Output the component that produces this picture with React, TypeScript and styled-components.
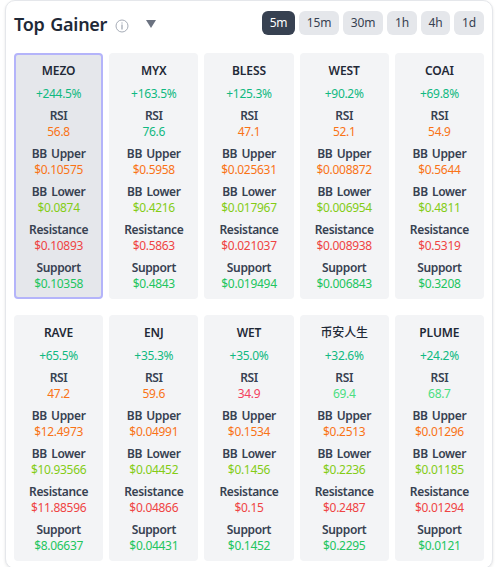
import React from "react";
import styled, { createGlobalStyle } from "styled-components";

const GlobalStyle = createGlobalStyle`
  * { box-sizing: border-box; }
  body {
    margin: 0;
    background: #fff;
    overflow: hidden;
    font-family: "Noto Sans", "Noto Sans CJK SC", sans-serif;
    color: #1f2937;
  }
`;

const Panel = styled.section`
  width: 488px;
  height: 569px;
  margin-left: 5px;
  padding: 10px 8px 8px;
  border: 1px solid #e5e7eb;
  border-radius: 10px;
  background: #fff;
  box-shadow: 0 1px 3px rgba(0, 0, 0, 0.1);
`;

const Header = styled.header`
  display: flex;
  align-items: center;
  height: 24px;
  margin-bottom: 18px;
`;

const Heading = styled.h2`
  margin: 0;
  width: 101px;
  font-size: 18px;
  line-height: 24px;
  font-weight: 600;
  letter-spacing: -0.3px;
  word-spacing: 1.5px;
  white-space: nowrap;
  padding-top: 2px;
`;

const InfoIcon = styled.svg`
  width: 14px;
  height: 14px;
  margin-top: 5px;
  flex: none;
`;

const Caret = styled.svg`
  width: 10px;
  height: 8px;
  margin: 1px 0 0 17px;
  flex: none;
`;

const Periods = styled.div`
  display: flex;
  gap: 4px;
  margin-left: auto;
`;

const PeriodButton = styled.button<{ $active?: boolean; $width: number }>`
  width: ${(p) => p.$width}px;
  height: 24px;
  padding: 0;
  border: 0;
  border-radius: 6px;
  font: 400 12px/24px "Noto Sans", sans-serif;
  letter-spacing: -0.2px;
  color: ${(p) => (p.$active ? "#fff" : "#374151")};
  background: ${(p) => (p.$active ? "#374151" : "#e5e7eb")};
`;

const Grid = styled.div`
  display: grid;
  grid-template-columns: repeat(5, 1fr);
  gap: 16px 6px;
`;

const Card = styled.article<{ $selected?: boolean }>`
  display: flex;
  flex-direction: column;
  gap: 6px;
  height: 246px;
  padding: 8px 0 0;
  border: 2px solid ${(p) => (p.$selected ? "#b4b4fa" : "transparent")};
  border-radius: 4px;
  background: ${(p) => (p.$selected ? "#e5e7eb" : "#f3f4f6")};
  text-align: center;
  font-size: 12px;
  line-height: 16px;
  white-space: nowrap;
`;

const Symbol = styled.div`
  height: 17px;
  font-family: "Noto Sans", "Noto Sans CJK JP", sans-serif;
  font-weight: 600;
  letter-spacing: -0.1px;

  &:lang(zh) {
    font-weight: 500;
  }
`;

const Label = styled.div`
  font-weight: 600;
  color: #374151;
  letter-spacing: -0.35px;
  word-spacing: 1.5px;
`;

const Value = styled.div<{ $color: string }>`
  color: ${(p) => p.$color};
  letter-spacing: -0.3px;
`;

const GREEN = "#10b981";
const LIGHT_GREEN = "#4ade80";
const ORANGE = "#f97316";
const ROSE = "#f43f5e";

const rsiColor = (rsi: number) =>
  rsi >= 70 ? GREEN : rsi >= 60 ? LIGHT_GREEN : rsi >= 40 ? ORANGE : ROSE;

const coins: [string, string, number, string, string, string, string][] = [
  ["MEZO", "244.5", 56.8, "0.10575", "0.0874", "0.10893", "0.10358"],
  ["MYX", "163.5", 76.6, "0.5958", "0.4216", "0.5863", "0.4843"],
  ["BLESS", "125.3", 47.1, "0.025631", "0.017967", "0.021037", "0.019494"],
  ["WEST", "90.2", 52.1, "0.008872", "0.006954", "0.008938", "0.006843"],
  ["COAI", "69.8", 54.9, "0.5644", "0.4811", "0.5319", "0.3208"],
  ["RAVE", "65.5", 47.2, "12.4973", "10.93566", "11.88596", "8.06637"],
  ["ENJ", "35.3", 59.6, "0.04991", "0.04452", "0.04866", "0.04431"],
  ["WET", "35.0", 34.9, "0.1534", "0.1456", "0.15", "0.1452"],
  ["币安人生", "32.6", 69.4, "0.2513", "0.2236", "0.2487", "0.2295"],
  ["PLUME", "24.2", 68.7, "0.01296", "0.01185", "0.01294", "0.0121"],
];

const periods: [string, number][] = [
  ["5m", 33],
  ["15m", 40],
  ["30m", 40],
  ["1h", 30],
  ["4h", 29],
  ["1d", 30],
];

const isLatin = (text: string) => /^[A-Z]+$/.test(text);

export default function App() {
  return (
    <>
      <GlobalStyle />
      <Panel>
        <Header>
          <Heading>Top Gainer</Heading>
          <InfoIcon viewBox="0 0 14 14" fill="none" stroke="#9ca3af">
            <circle cx="7" cy="7" r="6" strokeWidth="0.9" />
            <path d="M7 3.4v1.2M7 5.6v4.8" strokeWidth="1.2" />
          </InfoIcon>
          <Caret viewBox="0 0 10 8" fill="#6b7280">
            <path d="M0 0h10L5 8z" />
          </Caret>
          <Periods>
            {periods.map(([name, width]) => (
              <PeriodButton key={name} $width={width} $active={name === "5m"}>
                {name}
              </PeriodButton>
            ))}
          </Periods>
        </Header>
        <Grid>
          {coins.map(([symbol, change, rsi, upper, lower, resistance, support]) => (
            <Card key={symbol} $selected={symbol === "MEZO"}>
              <Symbol lang={isLatin(symbol) ? "en" : "zh"}>{symbol}</Symbol>
              <Value $color={GREEN}>{`+${change}%`}</Value>
              <div>
                <Label>RSI</Label>
                <Value $color={rsiColor(rsi)}>{rsi}</Value>
              </div>
              <div>
                <Label>BB Upper</Label>
                <Value $color={ORANGE}>{`$${upper}`}</Value>
              </div>
              <div>
                <Label>BB Lower</Label>
                <Value $color="#84cc16">{`$${lower}`}</Value>
              </div>
              <div>
                <Label>Resistance</Label>
                <Value $color="#ef4444">{`$${resistance}`}</Value>
              </div>
              <div>
                <Label>Support</Label>
                <Value $color="#22c55e">{`$${support}`}</Value>
              </div>
            </Card>
          ))}
        </Grid>
      </Panel>
    </>
  );
}
